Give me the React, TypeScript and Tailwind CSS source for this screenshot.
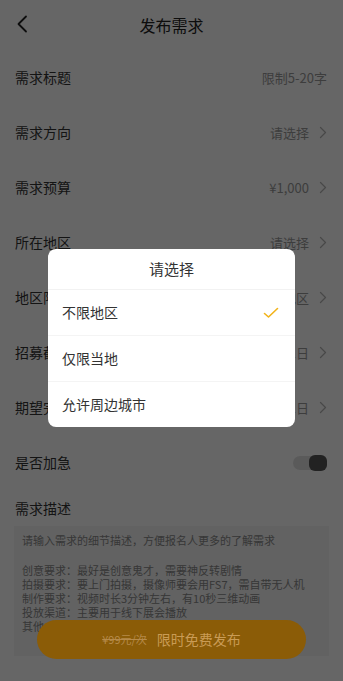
import React from "react";

const font = { fontFamily: '"Noto Sans CJK SC", "Noto Sans", sans-serif' };

function Chevron() {
  return (
    <svg width="8" height="13" viewBox="0 0 8 13" className="ml-[10px]">
      <path d="M1.5 1.5 L6.5 6.5 L1.5 11.5" fill="none" stroke="#b5b5b5" strokeWidth="1.3" strokeLinecap="round" strokeLinejoin="round" />
    </svg>
  );
}

function Row({ label, value, arrow = true }: { label: string; value: string; arrow?: boolean }) {
  return (
    <div className="h-[55px] flex items-center justify-between pl-[15px] pr-[16px]">
      <span className="text-[14px] text-[#333]">{label}</span>
      <div className="flex items-center">
        <span className="text-[13px] text-[#999]">{value}</span>
        {arrow && <Chevron />}
      </div>
    </div>
  );
}

export default function App() {
  return (
    <div className="relative w-[343px] h-[681px] overflow-hidden bg-white" style={font}>
      <div className="h-[50px] relative flex items-center justify-center">
        <svg width="12" height="18" viewBox="0 0 12 18" className="absolute left-[16px] top-[15px]">
          <path d="M10 1.5 L2.5 9 L10 16.5" fill="none" stroke="#222" strokeWidth="1.8" strokeLinecap="round" strokeLinejoin="round" />
        </svg>
        <span className="text-[16px] text-[#222]">发布需求</span>
      </div>
      <Row label="需求标题" value="限制5-20字" arrow={false} />
      <Row label="需求方向" value="请选择" />
      <Row label="需求预算" value="¥1,000" />
      <Row label="所在地区" value="请选择" />
      <Row label="地区限制" value="不限地区" />
      <Row label="招募截止" value="2021年12月31日" />
      <Row label="期望完成" value="2022年01月31日" />
      <div className="h-[55px] flex items-center justify-between pl-[15px] pr-[16px]">
        <span className="text-[14px] text-[#333]">是否加急</span>
        <div className="relative w-[34px] h-[14px] rounded-full bg-[#e2e2e2]">
          <div className="absolute right-0 top-[-1px] w-[18px] h-[16px] rounded-[6px] bg-[#555]" />
        </div>
      </div>
      <div className="h-[36px] flex items-center pl-[15px]">
        <span className="text-[14px] text-[#333]">需求描述</span>
      </div>
      <div className="mx-[14px] h-[130px] bg-[#f4f4f4] px-[8px] pt-[7px] text-[11px] leading-[14px] text-[#8a8a8a]">
        <p>请输入需求的细节描述，方便报名人更多的了解需求</p>
        <p className="mt-[16px]">创意要求：最好是创意鬼才，需要神反转剧情</p>
        <p>拍摄要求：要上门拍摄，摄像师要会用FS7，需自带无人机</p>
        <p>制作要求：视频时长3分钟左右，有10秒三维动画</p>
        <p>投放渠道：主要用于线下展会播放</p>
        <p>其他：无</p>
      </div>

      <div className="absolute inset-0 bg-black/60 z-40" />

      <div className="absolute left-[37px] top-[620px] w-[269px] h-[39px] rounded-full bg-[#8b5c07] z-50 flex items-center justify-center gap-[10px]">
        <span className="text-[11px] text-[#b58a4a] line-through">¥99元/次</span>
        <span className="text-[14px] text-[#c99b55]">限时免费发布</span>
      </div>

      <div className="absolute left-[48px] top-[249px] w-[247px] rounded-[8px] bg-white z-50 overflow-hidden">
        <div className="h-[41px] flex items-center justify-center border-b border-[#f2f2f2]">
          <span className="text-[15px] text-[#333]">请选择</span>
        </div>
        <div className="h-[46px] flex items-center justify-between pl-[14px] pr-[16px] border-b border-[#f4f4f4]">
          <span className="text-[14px] text-[#333]">不限地区</span>
          <svg width="16" height="12" viewBox="0 0 16 12">
            <path d="M1.5 6.5 L5.5 10 L14.5 1.5" fill="none" stroke="#f2b31a" strokeWidth="1.6" strokeLinecap="round" strokeLinejoin="round" />
          </svg>
        </div>
        <div className="h-[46px] flex items-center pl-[14px] border-b border-[#f4f4f4]">
          <span className="text-[14px] text-[#333]">仅限当地</span>
        </div>
        <div className="h-[45px] flex items-center pl-[14px]">
          <span className="text-[14px] text-[#333]">允许周边城市</span>
        </div>
      </div>
    </div>
  );
}
